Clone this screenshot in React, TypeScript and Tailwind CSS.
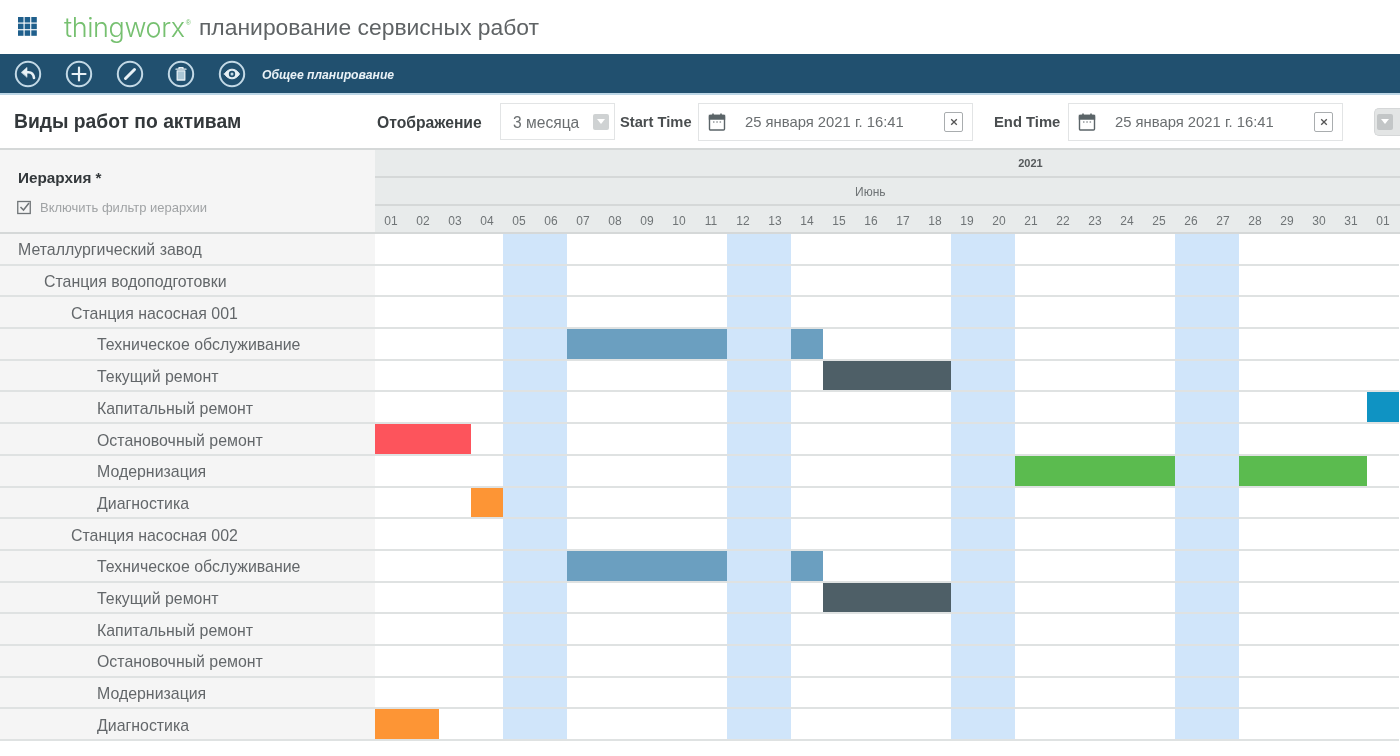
import React from "react";

const rows: [string, number][] = [
  ["Металлургический завод", 18],
  ["Станция водоподготовки", 44],
  ["Станция насосная 001", 71],
  ["Техническое обслуживание", 97],
  ["Текущий ремонт", 97],
  ["Капитальный ремонт", 97],
  ["Остановочный ремонт", 97],
  ["Модернизация", 97],
  ["Диагностика", 97],
  ["Станция насосная 002", 71],
  ["Техническое обслуживание", 97],
  ["Текущий ремонт", 97],
  ["Капитальный ремонт", 97],
  ["Остановочный ремонт", 97],
  ["Модернизация", 97],
  ["Диагностика", 97],
];

const days = [...Array.from({ length: 31 }, (_, i) => String(i + 1).padStart(2, "0")), "01"];

const weekends = [5, 12, 19, 26];

const bars: { row: number; start: number; span: number; color: string }[] = [
  { row: 3, start: 7, span: 5, color: "#6b9fc0" },
  { row: 3, start: 14, span: 1, color: "#6b9fc0" },
  { row: 4, start: 15, span: 4, color: "#4e5f67" },
  { row: 5, start: 32, span: 1, color: "#0f93c3" },
  { row: 6, start: 1, span: 3, color: "#fd545c" },
  { row: 7, start: 21, span: 5, color: "#5bbb4f" },
  { row: 7, start: 28, span: 4, color: "#5bbb4f" },
  { row: 8, start: 4, span: 1, color: "#fd9535" },
  { row: 10, start: 7, span: 5, color: "#6b9fc0" },
  { row: 10, start: 14, span: 1, color: "#6b9fc0" },
  { row: 11, start: 15, span: 4, color: "#4e5f67" },
  { row: 15, start: 1, span: 2, color: "#fd9535" },
];

function Round({ children }: { children: React.ReactNode }) {
  return (
    <svg width="28" height="28" viewBox="0 0 28 28" fill="none" stroke="#e8f1f6" strokeLinecap="round" strokeLinejoin="round">
      <circle cx="14" cy="14" r="12.2" stroke="#c3d9e6" strokeWidth="2" />
      {children}
    </svg>
  );
}

function Calendar() {
  return (
    <svg width="18" height="20" viewBox="0 0 18 20" fill="none" stroke="#5b6468" strokeWidth="1.4">
      <rect x="1.5" y="3.5" width="15" height="14.5" rx="1" />
      <path d="M1.5 3.5h15v3.5h-15z" fill="#5b6468" />
      <path d="M5 1.5v3M13 1.5v3" strokeWidth="1.6" />
      <path d="M5 10h1.5M8.3 10h1.5M11.6 10h1.5" strokeWidth="1" />
    </svg>
  );
}

function Clear() {
  return (
    <span className="flex h-[20px] w-[19px] items-center justify-center rounded-[2px] border border-[#a9adaf] bg-white">
      <svg width="8" height="8" viewBox="0 0 8 8" stroke="#555" strokeWidth="1.3"><path d="M1.2 1.2l5.6 5.6M6.8 1.2l-5.6 5.6" /></svg>
    </span>
  );
}

function DateField() {
  return (
    <div className="flex h-[38px] w-[275px] items-center border border-[#e2e4e5] bg-white px-[9px]">
      <Calendar />
      <span className="flex-1 pl-[19px] pt-[2px] text-[14.8px] text-[#6a6e70]">25 января 2021 г. 16:41</span>
      <Clear />
    </div>
  );
}

export default function App() {
  return (
    <div className="h-[756px] w-[1400px] overflow-hidden bg-white font-['Liberation_Sans',Arial,sans-serif] blur-[0.4px]">
      <header className="flex h-[54px] items-center">
        <svg className="mb-[2px] ml-[18px]" width="19" height="19" viewBox="0 0 20 20" fill="#1f5f8c">
          {[0, 7, 14].flatMap((y) =>
            [0, 7, 14].map((x) => <rect key={`${x}-${y}`} x={x} y={y} width="5.8" height="5.8" />)
          )}
        </svg>
        <span className="ml-[27px] font-['Inter',sans-serif] text-[27px] leading-none tracking-[-0.4px] text-[#76c070] [font-weight:300]">thingworx</span>
        <span className="mb-[8px] ml-[1px] text-[7px] text-[#76c070]">®</span>
        <span className="ml-[8px] text-[22.9px] leading-none text-[#5f6365]">планирование сервисных работ</span>
      </header>

      <nav className="flex h-[41px] items-center border-b-2 border-[#bcd6e6] bg-[#21506f] pl-[14px]">
        <div className="flex w-[248px] items-center gap-[23px]">
          <Round>
            <path d="M7.5 12.2l5.5-4.800v9.600z" fill="#e8f1f6" strokeWidth="0.6" />
            <path d="M12 12.200h2.500c3 0 5 1.800 5.500 5.800" strokeWidth="2.6" />
          </Round>
          <Round>
            <path d="M14 7.500v13M7.500 14h13" strokeWidth="2.2" />
          </Round>
          <Round>
            <path d="M9.500 18.500L18.500 9.500" strokeWidth="3" />
          </Round>
          <Round>
            <path d="M9 9.200h10M12 9V7.600h4V9" strokeWidth="1.300" />
            <path d="M10.200 10.800h7.600v9.200h-7.600z" strokeWidth="1.300" fill="#aac6d6" />
          </Round>
          <Round>
            <path d="M6.500 14c2-3.200 4.600-4.800 7.500-4.800s5.500 1.600 7.500 4.800c-2 3.200-4.600 4.800-7.500 4.800s-5.500-1.600-7.500-4.800z" fill="#e8f1f6" strokeWidth="1" />
            <circle cx="14" cy="14" r="3.200" fill="#21506f" stroke="none" />
            <circle cx="14" cy="14" r="1.500" fill="#c3d9e6" stroke="none" />
          </Round>
        </div>
        <span className="pt-[3px] text-[12.2px] font-bold italic text-[#eaf2f7]">Общее планирование</span>
      </nav>

      <section className="flex h-[55px] items-center border-b-2 border-[#d5d8d8]">
        <h1 className="w-[377px] pl-[14px] pt-[1px] text-[19.3px] font-bold text-[#33383b]">Виды работ по активам</h1>
        <span className="w-[123px] pt-[3px] text-[15.7px] font-bold text-[#3c4143]">Отображение</span>
        <div className="flex h-[37px] w-[115px] items-center border border-[#e2e4e5] pl-[12px] pr-[5px]">
          <span className="flex-1 pt-[2px] text-[15.6px] text-[#6a6e70]">3 месяца</span>
          <span className="flex h-[16px] w-[16px] items-center justify-center rounded-[2px] bg-[#cfd2d3]">
            <span className="h-0 w-0 border-x-[4px] border-t-[5px] border-x-transparent border-t-white" />
          </span>
        </div>
        <span className="w-[83px] pl-[5px] pt-[2px] text-[14.7px] font-bold text-[#4a4e50]">Start Time</span>
        <DateField />
        <span className="w-[95px] pl-[21px] pt-[2px] text-[14.8px] font-bold text-[#4a4e50]">End Time</span>
        <DateField />
        <div className="ml-[31px] flex h-[28px] flex-1 items-center rounded-l-[5px] border border-r-0 border-[#d5d7d8] bg-[#e3e5e5] pl-[2px]">
          <span className="flex h-[16px] w-[16px] items-center justify-center rounded-[2px] bg-[#c3c6c7]">
            <span className="h-0 w-0 border-x-[4px] border-t-[5px] border-x-transparent border-t-white" />
          </span>
        </div>
      </section>

      <div className="flex h-[84px]">
        <div className="w-[375px] border-b-2 border-[#d5d8d8] bg-[#f5f5f5] pl-[18px] pt-[19px]">
          <div className="text-[15.3px] font-bold leading-[18px] text-[#33383b]">Иерархия *</div>
          <div className="mt-[11px] flex items-center gap-[8px]">
            <svg className="-ml-[1px]" width="15" height="15" viewBox="0 0 15 15" fill="none" stroke="#6f7477">
              <rect x="0.75" y="1.5" width="12.5" height="12" strokeWidth="1.3" />
              <path d="M3.5 7l3 3 5.5-7" strokeWidth="1.5" />
            </svg>
            <span className="text-[13px] text-[#a0a3a5]">Включить фильтр иерархии</span>
          </div>
        </div>
        <div className="flex w-[1025px] flex-col bg-[#e8ebeb] text-[#6f7476]">
          <div className="flex h-[28px] items-center justify-center border-b-2 border-[#d5d8d8] text-[11px] font-bold text-[#55595b]">
            <span className="pl-[286px]">2021</span>
          </div>
          <div className="flex h-[28px] items-center border-b-2 border-[#d5d8d8] pl-[480px] pt-[2px] text-[12px]">Июнь</div>
          <div className="grid h-[28px] flex-1 grid-cols-[repeat(32,32px)] items-center border-b-2 border-[#d5d8d8] pt-[3px] text-center text-[12px]">
            {days.map((d, i) => (
              <span key={i}>{d}</span>
            ))}
          </div>
        </div>
      </div>

      <div className="flex h-[507px]">
        <div className="grid w-[375px] grid-rows-[repeat(16,1fr)] bg-[#f5f5f5]">
          {rows.map(([label, pad], i) => (
            <div
              key={i}
              className="flex items-center border-b-2 border-[#dfe2e2] pt-[3px] text-[15.9px] text-[#63676a]"
              style={{ paddingLeft: pad }}
            >
              {label}
            </div>
          ))}
        </div>
        <div className="grid w-[1025px] grid-cols-[repeat(32,32px)] grid-rows-[repeat(16,1fr)]">
          {weekends.map((d) => (
            <div
              key={d}
              className="bg-[#d0e5fa]"
              style={{ gridColumn: `${d} / span 2`, gridRow: "1 / -1" }}
            />
          ))}
          {rows.map((_, i) => (
            <div
              key={i}
              className="border-b-2 border-[#dfe2e2]"
              style={{ gridColumn: "1 / -1", gridRow: i + 1 }}
            />
          ))}
          {bars.map((b, i) => (
            <div
              key={i}
              className="mb-[2px]"
              style={{ backgroundColor: b.color, gridColumn: `${b.start} / span ${b.span}`, gridRow: b.row + 1 }}
            />
          ))}
        </div>
      </div>
    </div>
  );
}
